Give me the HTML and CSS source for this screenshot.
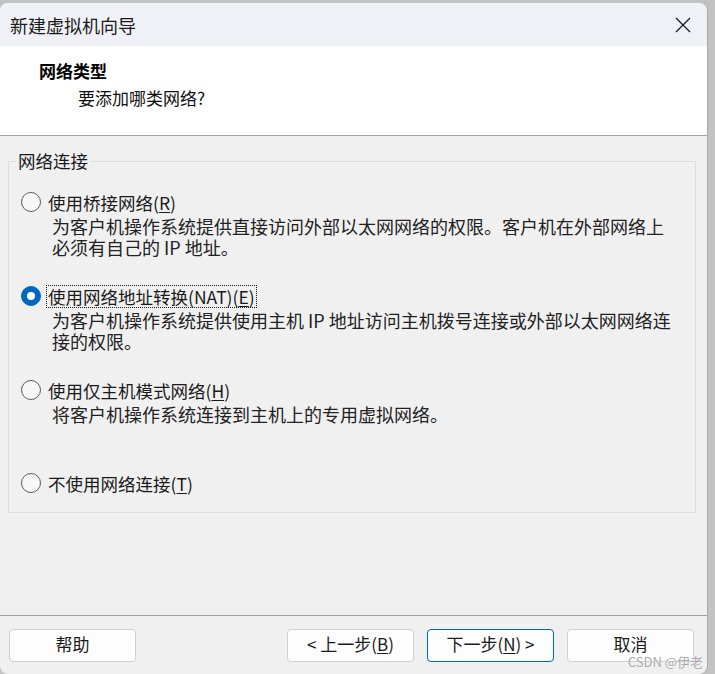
FILE: index.html
```html
<!DOCTYPE html>
<html lang="zh-CN">
<head>
<meta charset="utf-8">
<title>新建虚拟机向导</title>
<link rel="stylesheet" href="styles.css">
</head>
<body>
<div class="window">
  <div class="titlebar">
    <span class="title">新建虚拟机向导</span>
    <svg class="close" width="16" height="16" viewBox="0 0 16 16"><path d="M1 1 L15 15 M15 1 L1 15" stroke="#1a1a1a" stroke-width="1.3" fill="none"/></svg>
  </div>
  <div class="header">
    <div class="h-title">网络类型</div>
    <div class="h-sub">要添加哪类网络?</div>
  </div>
  <div class="content">
    <fieldset class="group">
      <legend>网络连接</legend>
      <div class="opt">
        <div class="row"><span class="radio"></span><span class="label">使用桥接网络(<u>R</u>)</span></div>
        <div class="desc">为客户机操作系统提供直接访问外部以太网网络的权限。客户机在外部网络上<br>必须有自己的 IP 地址。</div>
      </div>
      <div class="opt">
        <div class="row"><span class="radio checked"></span><span class="label focus">使用网络地址转换(NAT)(<u>E</u>)</span></div>
        <div class="desc">为客户机操作系统提供使用主机 IP 地址访问主机拨号连接或外部以太网网络连<br>接的权限。</div>
      </div>
      <div class="opt">
        <div class="row"><span class="radio"></span><span class="label">使用仅主机模式网络(<u>H</u>)</span></div>
        <div class="desc">将客户机操作系统连接到主机上的专用虚拟网络。</div>
      </div>
      <div class="opt last">
        <div class="row"><span class="radio"></span><span class="label">不使用网络连接(<u>T</u>)</span></div>
      </div>
    </fieldset>
  </div>
  <div class="footer">
    <button class="btn">帮助</button>
    <button class="btn push">&lt; 上一步(<u>B</u>)</button>
    <button class="btn primary">下一步(<u>N</u>) &gt;</button>
    <button class="btn">取消</button>
  </div>
  <div class="watermark">CSDN @伊老</div>
</div>
</body>
</html>
```
FILE: styles.css
```css
html, body {
  margin: 0;
  padding: 0;
}
body {
  background: #c2c2c2;
  width: 715px;
  height: 674px;
  overflow: hidden;
  font-family: "Noto Sans CJK SC", "Noto Sans", sans-serif;
  color: #1a1a1a;
}
.window {
  position: relative;
  margin-top: 3px;
  width: 707px;
  height: 671px;
  background: #f0f0f0;
  border-radius: 8px;
  overflow: hidden;
  display: flex;
  flex-direction: column;
  box-shadow: 1px 0 0 #a8a8a8;
}
.titlebar {
  height: 43px;
  flex: none;
  background: #eff1f6;
  display: flex;
  align-items: center;
  padding: 0 16px 0 10px;
}
.title {
  font-size: 18px;
  line-height: 24px;
  flex: 1;
  color: #1a1a1a;
}
.close {
  display: block;
}
.header {
  height: 76px;
  flex: none;
  background: #ffffff;
  border-bottom: 1px solid #a0a0a0;
  padding-top: 13px;
  box-sizing: content-box;
}
.h-title {
  font-size: 17px;
  font-weight: bold;
  line-height: 24px;
  padding-left: 39px;
  color: #000;
}
.h-sub {
  font-size: 17px;
  line-height: 24px;
  margin-top: 3px;
  padding-left: 78px;
  color: #111;
}
.content {
  flex: 1;
  min-height: 0;
}
.group {
  margin: 14px 11px 0 8px;
  border: 1px solid #dcdcdc;
  padding: 19px 0 18px 12px;
  min-width: 0;
}
.group legend {
  font-size: 17.5px;
  line-height: 22px;
  padding: 0 2px;
  margin-left: -5px;
  color: #1a1a1a;
}
.opt + .opt {
  margin-top: 27px;
}
.opt.last {
  margin-top: 47px;
}
.row {
  display: flex;
  align-items: center;
  height: 22px;
}
.radio {
  width: 18px;
  height: 18px;
  border: 1px solid #5c5c5c;
  border-radius: 50%;
  background: #f7f7f7;
  flex: none;
  box-sizing: content-box;
  position: relative;
}
.radio.checked {
  background: #0067c0;
  border-color: #0067c0;
}
.radio.checked::after {
  content: "";
  position: absolute;
  left: 5px;
  top: 5px;
  width: 8px;
  height: 8px;
  border-radius: 50%;
  background: #ffffff;
}
.label {
  margin-left: 5px;
  font-size: 17.5px;
  line-height: 21px;
  padding: 0 1px;
  border: 1px dotted transparent;
  white-space: nowrap;
}
.label.focus {
  border-color: #1a1a1a;
}
u {
  text-decoration-thickness: 1px;
  text-underline-offset: 2px;
}
.desc {
  margin-top: 3px;
  padding-left: 31px;
  font-size: 18px;
  line-height: 21px;
  color: #222;
  white-space: nowrap;
}
.footer {
  height: 45px;
  flex: none;
  border-top: 1px solid #a0a0a0;
  padding: 13px 13px 0 9px;
  box-sizing: content-box;
  display: flex;
  align-items: flex-start;
  gap: 13px;
}
.btn {
  width: 127px;
  height: 33px;
  background: #fdfdfd;
  border: 1px solid #d0d0d0;
  border-radius: 4px;
  font-family: "Noto Sans CJK SC", "Noto Sans", sans-serif;
  font-size: 17px;
  color: #1a1a1a;
  padding: 0 0 3px 0;
  line-height: 26px;
}
.btn.push {
  margin-left: auto;
}
.btn.primary {
  border-color: #0067c0;
}
.watermark {
  position: absolute;
  right: 4px;
  bottom: 4px;
  font-size: 13px;
  line-height: 16px;
  color: #a9a9a9;
  font-family: "Noto Sans CJK SC", "Noto Sans", sans-serif;
  text-shadow: 0 0 2px #fff;
}
```
